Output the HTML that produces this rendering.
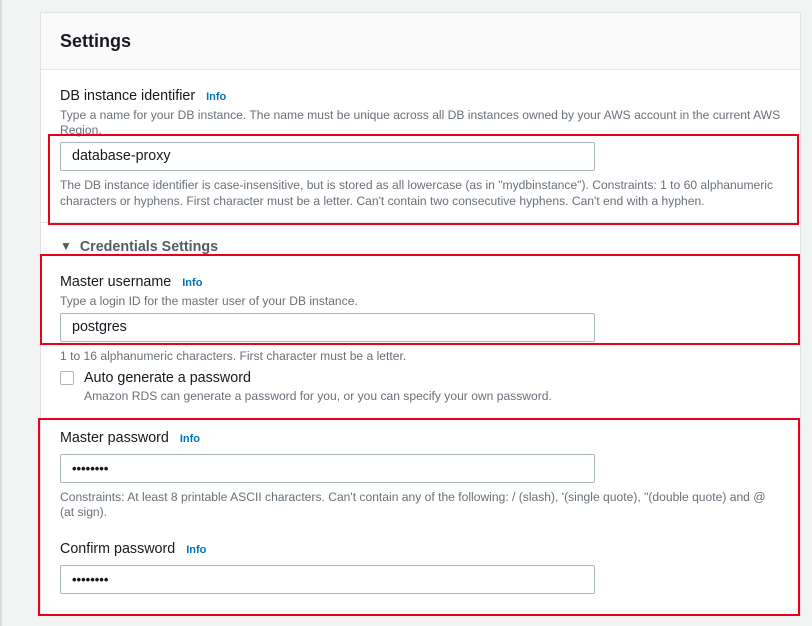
<!DOCTYPE html>
<html><head><style>
*{box-sizing:border-box;margin:0;padding:0}
body{width:812px;height:626px;background:#f2f3f3;font-family:"Liberation Sans",sans-serif;position:relative;overflow:hidden;color:#16191f}
.a{position:absolute;white-space:nowrap}
.card{position:absolute;left:40px;top:12px;width:761px;height:604px;background:#fff;border:1px solid #e0e2e2}
.hdr{position:absolute;left:41px;top:13px;width:759px;height:57px;background:#fafafa;border-bottom:1px solid #e4e6e6}
.lbl{font-size:14.3px;color:#16191f}
.info{font-size:11px;font-weight:bold;color:#0073bb;margin-left:11px}
.d{font-size:12.1px;color:#687078}
.in{position:absolute;left:60px;width:535px;height:29px;border:1px solid #aab7b8;border-radius:2px;background:#fff;font-size:14.3px;padding-left:11px;line-height:27px}
.red{position:absolute;border:2px solid #e8001c}
.dots{font-size:13px;font-weight:bold}
</style></head><body>
<div class="a" style="left:0;top:0;width:2px;height:626px;background:#dcdcdc"></div>
<div class="card"></div>
<div class="hdr"></div>
<div class="a" style="left:60px;top:31px;font-size:18px;font-weight:bold">Settings</div>

<div class="a lbl" style="left:60px;top:88px">DB instance identifier<span class="info">Info</span></div>
<div class="a d" style="left:60px;top:108px">Type a name for your DB instance. The name must be unique across all DB instances owned by your AWS account in the current AWS</div>
<div class="a d" style="left:60px;top:123px">Region.</div>
<div class="in" style="top:142px">database-proxy</div>
<div class="a d" style="left:60px;top:178px">The DB instance identifier is case-insensitive, but is stored as all lowercase (as in "mydbinstance"). Constraints: 1 to 60 alphanumeric</div>
<div class="a d" style="left:60px;top:194px">characters or hyphens. First character must be a letter. Can't contain two consecutive hyphens. Can't end with a hyphen.</div>
<div class="a" style="left:41px;top:222px;width:759px;height:1px;background:#e4e6e6"></div>
<div class="red" style="left:48px;top:134px;width:751px;height:91px"></div>

<div class="a" style="left:60px;top:239px;font-size:14.3px;font-weight:bold;color:#545b64"><span style="font-size:12px;position:relative;top:-1px">▼</span>&nbsp;&nbsp;Credentials Settings</div>

<div class="red" style="left:40px;top:254px;width:760px;height:91px"></div>
<div class="a lbl" style="left:60px;top:274px">Master username<span class="info">Info</span></div>
<div class="a d" style="left:60px;top:294px">Type a login ID for the master user of your DB instance.</div>
<div class="in" style="top:313px">postgres</div>
<div class="a d" style="left:60px;top:349px">1 to 16 alphanumeric characters. First character must be a letter.</div>
<div class="a" style="left:60px;top:371px;width:14px;height:14px;border:1px solid #aab7b8;border-radius:2px"></div>
<div class="a lbl" style="left:84px;top:370px">Auto generate a password</div>
<div class="a d" style="left:84px;top:389px">Amazon RDS can generate a password for you, or you can specify your own password.</div>

<div class="red" style="left:38px;top:418px;width:762px;height:198px"></div>
<div class="a lbl" style="left:60px;top:430px">Master password<span class="info">Info</span></div>
<div class="in dots" style="top:454px">••••••••</div>
<div class="a d" style="left:60px;top:490px">Constraints: At least 8 printable ASCII characters. Can't contain any of the following: / (slash), '(single quote), "(double quote) and @</div>
<div class="a d" style="left:60px;top:505px">(at sign).</div>
<div class="a lbl" style="left:60px;top:541px">Confirm password<span class="info">Info</span></div>
<div class="in dots" style="top:565px">••••••••</div>
</body></html>
